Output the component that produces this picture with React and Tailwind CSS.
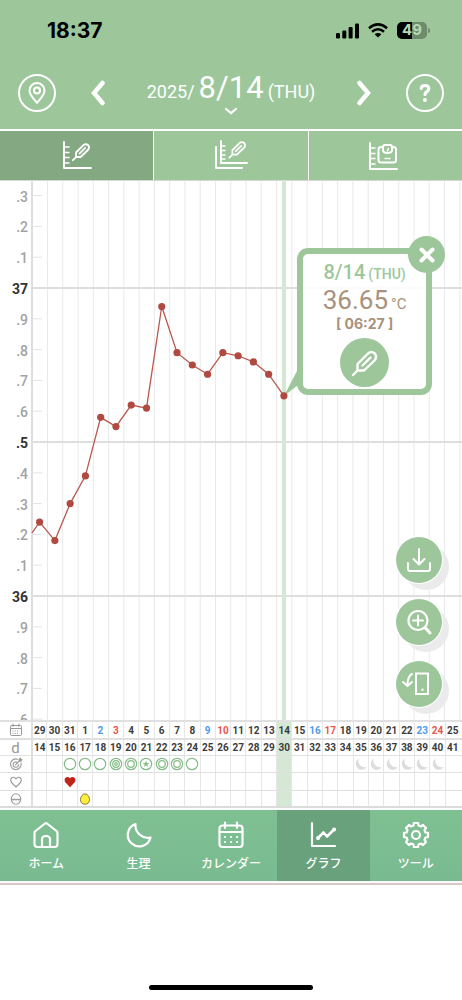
import { clsx } from "clsx";

const FIRST_X = 39.6;
const STEP = 15.27;

const READINGS = [
  36.24, 36.18, 36.3, 36.39, 36.58, 36.55, 36.62, 36.61, 36.94, 36.79, 36.75,
  36.72, 36.79, 36.78, 36.76, 36.72, 36.65,
];

const DAYS = [
  29, 30, 31, 1, 2, 3, 4, 5, 6, 7, 8, 9, 10, 11, 12, 13, 14, 15, 16, 17, 18, 19,
  20, 21, 22, 23, 24, 25,
];
const SATURDAYS = [4, 11, 18, 25];
const SUNDAYS = [5, 12, 19, 26];
const TODAY = 16;

const FERTILITY = {
  2: "open",
  3: "open",
  4: "open",
  5: "target",
  6: "double",
  7: "star",
  8: "double",
  9: "double",
  10: "open",
};

const TICKS = Array.from({ length: 18 }, (_, i) => 373 - i);

const tempToY = (temp) => 108 + (37 - temp) * 308;
const indexToX = (i) => FIRST_X + i * STEP;

function Icon({ size = 24, width = 2, className, children }) {
  return (
    <svg
      viewBox={`0 0 ${size} ${size}`}
      width={size}
      height={size}
      fill="none"
      stroke="currentColor"
      strokeWidth={width}
      strokeLinecap="round"
      strokeLinejoin="round"
      className={className}
      aria-hidden="true"
    >
      {children}
    </svg>
  );
}

function Thermometer() {
  return (
    <>
      <path d="M2 26 L6.500 21.500 V15 L17 4.500 Q20.500 1.700 23.800 4.500 Q26.500 8 23.500 11.500 L13 21.500 H6.500" />
      <path d="M11.500 16.500 L19.500 8.500" />
    </>
  );
}

function StatusBar() {
  return (
    <div className="flex h-[60px] items-center justify-between pt-px pr-[32px] pl-[47px]">
      <span className="font-['Inter',sans-serif] text-[21px] font-bold text-black">
        18:37
      </span>
      <div className="flex items-center gap-[9px] text-black">
        <svg width="23" height="16" viewBox="0 0 23 16" fill="currentColor">
          <rect x="0" y="10" width="4" height="5.500" rx="1.200" />
          <rect x="6.300" y="7.500" width="4" height="8" rx="1.200" />
          <rect x="12.600" y="4" width="4" height="11.500" rx="1.200" />
          <rect x="19" y="0.500" width="4" height="15" rx="1.200" />
        </svg>
        <svg width="20" height="15" viewBox="0 0 20 15" fill="none" stroke="currentColor" strokeWidth="2.500">
          <path d="M1 5.200 Q10 -2.400 19 5.200" />
          <path d="M4 8.800 Q10 3.600 16 8.800" />
          <path d="M10 14.500 L6.600 11.300 Q10 8.600 13.400 11.300 Z" fill="currentColor" stroke="none" />
        </svg>
        <div className="flex items-center gap-px">
          <span className="flex h-[17px] w-[30px] items-center justify-center rounded-[5px] bg-linear-to-r from-black from-50% to-[#6d8c6c] to-50% font-['Inter',sans-serif] text-[15px] font-bold text-[#b4d8b2]">
            49
          </span>
          <span className="h-[5px] w-[2px] rounded-r-full bg-[#6d8c6c]" />
        </div>
      </div>
    </div>
  );
}

function DateHeader() {
  return (
    <div className="flex h-[69px] items-start justify-between px-[18px] pt-[14px] text-white">
      <button type="button" aria-label="Location" className="flex size-[38px] items-center justify-center rounded-full border-2 border-white">
        <Icon size={24}>
          <path d="M12 22 C9 18 4.500 14 4.500 9.500 A7.500 7.500 0 0 1 19.500 9.500 C19.500 14 15 18 12 22 Z" />
          <circle cx="12" cy="9.500" r="3" />
        </Icon>
      </button>
      <button type="button" aria-label="Previous day" className="flex h-[38px] w-5 items-center justify-center">
        <svg width="16" height="26" viewBox="0 0 16 26" fill="none" stroke="currentColor" strokeWidth="4.500" strokeLinecap="round">
          <path d="M12.500 3 L4 13 L12.500 23" />
        </svg>
      </button>
      <button type="button" className="flex w-[182px] flex-col items-center">
        <span className="flex h-[33px] items-baseline gap-[4px] text-[18px] leading-[28px]">
          <span>2025/</span>
          <span className="text-[31px]">8/14</span>
          <span>(THU)</span>
        </span>
        <svg width="14" height="8" viewBox="0 0 14 8" fill="none" stroke="currentColor" strokeWidth="2.200" strokeLinecap="round">
          <path d="M2 2 L7 6 L12 2" />
        </svg>
      </button>
      <button type="button" aria-label="Next day" className="flex h-[38px] w-5 items-center justify-center">
        <svg width="16" height="26" viewBox="0 0 16 26" fill="none" stroke="currentColor" strokeWidth="4.500" strokeLinecap="round">
          <path d="M3.500 3 L12 13 L3.500 23" />
        </svg>
      </button>
      <button type="button" aria-label="Help" className="flex size-[38px] items-center justify-center rounded-full border-2 border-white">
        <svg width="14" height="20" viewBox="0 0 14 20" fill="none" stroke="currentColor" strokeWidth="3.200" strokeLinecap="round" strokeLinejoin="round">
          <path d="M3.200 5.500 Q3.500 2.500 7 2.500 Q10.800 2.500 10.800 5.800 Q10.800 7.800 8.800 8.800 Q7 9.700 7 11.500" />
          <circle cx="7" cy="17" r="2" fill="currentColor" stroke="none" />
        </svg>
      </button>
    </div>
  );
}

function Ruler() {
  return (
    <>
      <path d="M2 1 V27 H29" />
      <path d="M2 6 H7 M2 11.500 H7 M2 16.500 H7 M2 22 H7" strokeWidth="1.500" />
    </>
  );
}

function GraphTabs() {
  const tab =
    "flex h-[49px] flex-1 items-center justify-center border-white text-white";
  return (
    <div role="tablist" className="flex border-t-2 border-white bg-[#9dc79b]">
      <button type="button" role="tab" aria-selected="true" aria-label="体温" className={clsx(tab, "bg-[#83a882]")}>
        <Icon size={30}>
          <Ruler />
          <g transform="translate(9.500 1) scale(0.700)" strokeWidth="2.700">
            <Thermometer />
          </g>
        </Icon>
      </button>
      <button type="button" role="tab" aria-selected="false" aria-label="体温の比較" className={clsx(tab, "border-l")}>
        <Icon size={34}>
          <path d="M2 8 V29 H28" />
          <path d="M7 2 V24 H33" />
          <path d="M7 7 H11 M7 11.500 H11 M7 16 H11 M7 20 H11" strokeWidth="1.400" />
          <g transform="translate(14 1) scale(0.680)" strokeWidth="2.700">
            <Thermometer />
          </g>
        </Icon>
      </button>
      <button type="button" role="tab" aria-selected="false" aria-label="体重" className={clsx(tab, "border-l")}>
        <Icon size={34}>
          <g transform="translate(0 3)">
            <Ruler />
            <path d="M14 5 H13 Q10.500 5 10.500 7.500 V18 Q10.500 20.500 13 20.500 H25.500 Q28 20.500 28 18 V7.500 Q28 5 25.500 5 H24.500" />
            <path d="M15 5 Q15 3 17 3 H22 Q24 3 24 5 V8 Q24 11 19.500 11 Q15 11 15 8 Z" />
            <path d="M19.500 9 L20.500 6.500 M17 16.500 H22" strokeWidth="1.500" />
          </g>
        </Icon>
      </button>
    </div>
  );
}

function TemperatureChart() {
  const points = READINGS.map((t, i) => [indexToX(i), tempToY(t)]);
  const line = [[32, 353], ...points].map((p) => p.join(",")).join(" ");

  return (
    <svg
      viewBox="0 0 462 540"
      className="block w-full font-['Roboto',sans-serif]"
      role="img"
      aria-label="基礎体温グラフ"
    >
      {Array.from({ length: 28 }, (_, i) => (
        <line key={i} x1={47.5 + i * STEP} x2={47.5 + i * STEP} y1="0" y2="540" stroke="#e9e9e9" />
      ))}
      <line x1="0" x2="462" y1="0.500" y2="0.500" stroke="#d6d6d6" />
      <line x1="32" x2="32" y1="0" y2="540" stroke="#dedede" strokeWidth="2" />
      {TICKS.map((tick) => {
        const y = tempToY(tick / 10);
        const major = tick % 5 === 0;
        const label = tick % 10 === 0 ? tick / 10 : `.${tick % 10}`;
        return (
          <g key={tick}>
            <line
              x1="32"
              x2={major ? 462 : 42}
              y1={y}
              y2={y}
              stroke={major ? "#dedede" : "#e4e4e4"}
              strokeWidth={major ? 2 : 1}
            />
            <text
              x="28"
              y={y + 6}
              textAnchor="end"
              fontSize="14"
              fontWeight={major ? 700 : 500}
              fill={major ? "#333" : "#a3a3a3"}
            >
              {label}
            </text>
          </g>
        );
      })}
      <rect x="282" y="0" width="4" height="540" fill="#d5e8d5" />
      <path d="M284 216 L298 189 V205 Z" fill="#9dc79b" />
      <polyline points={line} fill="none" stroke="#b9584e" strokeWidth="1.300" />
      {points.map(([x, y]) => (
        <circle key={x} cx={x} cy={y} r="3.600" fill="#b04a40" />
      ))}
    </svg>
  );
}

function ReadingPopup() {
  return (
    <div className="absolute top-[68px] left-[64.300%] flex h-[147px] w-[135px] flex-col items-center rounded-[11px] border-6 border-[#9dc79b] bg-white/90 pt-[5px]">
      <p className="flex items-baseline gap-[3px] text-[20px] leading-[26px] font-medium text-[#9dc79b]">
        8/14 <span className="text-[14px] leading-none">(THU)</span>
      </p>
      <p className="flex items-baseline gap-[3px] text-[26px] leading-[31px] text-[#a8927c]">
        36.65 <span className="text-[15px] leading-none">°C</span>
      </p>
      <p className="font-['Inter',sans-serif] text-[14px] leading-4 font-bold text-[#a8927c]">
        [ 06:27 ]
      </p>
      <button type="button" aria-label="体温を編集" className="mt-[6px] flex size-[49px] shrink-0 items-center justify-center rounded-full bg-[#9dc79b] text-white">
        <Icon size={28} width={2.4}>
          <Thermometer />
        </Icon>
      </button>
      <button type="button" aria-label="閉じる" className="absolute -top-[18px] -right-[19px] flex size-[37px] items-center justify-center rounded-full bg-[#9dc79b] text-white">
        <Icon size={16} width={4}>
          <path d="M2.500 2.500 L13.500 13.500 M13.500 2.500 L2.500 13.500" />
        </Icon>
      </button>
    </div>
  );
}

function FloatingActions() {
  const fab =
    "flex size-[46px] items-center justify-center rounded-full bg-[#9dc79b] text-white shadow-[0_0_0_1px_#fff,7px_7px_0_0_#ebebeb]";
  return (
    <div className="absolute right-[20px] bottom-[13px] flex flex-col gap-4">
      <button type="button" aria-label="保存" className={fab}>
        <Icon size={28}>
          <path d="M14 3 V18 M8.500 13 L14 18.500 L19.500 13" />
          <path d="M3 17 V23 Q3 25 5 25 H23 Q25 25 25 23 V17" />
        </Icon>
      </button>
      <button type="button" aria-label="拡大" className={fab}>
        <Icon size={28}>
          <circle cx="13" cy="12.500" r="9.500" strokeWidth="2.200" />
          <path d="M8 12.500 H18 M13 7.500 V17.500" />
          <path d="M20 19.500 L25 25" strokeWidth="3" />
        </Icon>
      </button>
      <button type="button" aria-label="回転" className={fab}>
        <Icon size={28} className="overflow-visible">
          <path d="M11 3.500 H23 V24 H11 Z" strokeLinejoin="miter" />
          <circle cx="17.500" cy="19.800" r="0.400" strokeWidth="1.600" />
          <path d="M7 4 Q3 6 2.500 14 M-2 12 L2.500 16 L7 12" />
        </Icon>
      </button>
    </div>
  );
}

function FertilityMark({ type }) {
  if (!type) return null;
  return (
    <svg width="14" height="14" viewBox="0 0 14 14" fill="none" stroke="#86bd88" strokeWidth="1.200">
      <circle cx="7" cy="7" r="5.700" />
      {(type === "double" || type === "target") && <circle cx="7" cy="7" r="3.300" />}
      {type === "target" && <circle cx="7" cy="7" r="1.300" />}
      {type === "star" && (
        <path d="M7 3.500 L7.900 5.900 L10.400 6 L8.400 7.500 L9.100 10 L7 8.600 L4.900 10 L5.600 7.500 L3.600 6 L6.100 5.900 Z" fill="#86bd88" stroke="none" />
      )}
    </svg>
  );
}

function Moon() {
  return (
    <svg width="14" height="14" viewBox="0 0 14 14" fill="#dcdcdc">
      <path d="M5 1.500 A6 6 0 1 0 13 9.800 A6.200 6.200 0 0 1 5 1.500 Z" />
    </svg>
  );
}

function Row({ label, icon, className, children }) {
  return (
    <tr
      className={clsx(
        "grid grid-cols-[31px_repeat(28,minmax(0,1fr))] border-t border-[#e0e0e0] pr-[2px]",
        className,
      )}
    >
      <th scope="row" aria-label={label} className="flex items-center justify-center text-[#999]">
        {icon}
      </th>
      {DAYS.map((day, i) => (
        <td
          key={i}
          className={clsx(
            "flex items-center justify-center",
            i === 0 ? "border-l-2 border-[#dedede]" : "border-l border-[#e6e6e6]",
            i === TODAY && "bg-[#d5e8d5]",
          )}
        >
          {children(i, day)}
        </td>
      ))}
    </tr>
  );
}

function DayTable() {
  return (
    <table className="block text-[10px] font-bold text-[#3c3c3c]">
      <tbody className="block border-b-2 border-[#dcdcdc]">
        <Row
          label="日付"
          className="h-[18px] border-t-2"
          icon={
            <Icon size={14} width={1}>
              <rect x="1.500" y="2.500" width="11" height="10" rx="1" />
              <path d="M1.500 5.500 H12.500 M4 1 V3.500 M10 1 V3.500" />
              <path d="M3.500 8 H10.500 M3.500 10.500 H10.500" strokeDasharray="1 1.300" strokeLinecap="butt" />
            </Icon>
          }
        >
          {(i, day) => (
            <span
              className={clsx(
                SATURDAYS.includes(i) && "text-[#4f9bec]",
                SUNDAYS.includes(i) && "text-[#e8564c]",
              )}
            >
              {day}
            </span>
          )}
        </Row>
        <Row
          label="周期日数"
          className="h-[17px] border-t-2"
          icon={<span className="text-[15px] leading-[14px] font-normal">d</span>}
        >
          {(i) => i + 14}
        </Row>
        <Row
          label="妊娠しやすさ"
          className="h-[17px]"
          icon={
            <Icon size={14} width={1.1}>
              <path d="M8.500 2.200 A5.300 5.300 0 1 0 12 6" />
              <path d="M8 5.200 A2.700 2.700 0 1 0 9.500 7.500 M6.500 7.800 L12 2.300 M10 4.300 V2.500 L11.500 1 V2.500 H13 L11.800 4.300 Z" />
            </Icon>
          }
        >
          {(i) =>
            i >= 21 && i <= 26 ? <Moon /> : <FertilityMark type={FERTILITY[i]} />
          }
        </Row>
        <Row
          label="仲良し"
          className="h-[18px]"
          icon={
            <Icon size={14} width={1.1}>
              <path d="M7 12 L2.500 7.500 Q0.800 5 2.500 3 Q5 1.200 7 3.800 Q9 1.200 11.500 3 Q13.200 5 11.500 7.500 Z" />
            </Icon>
          }
        >
          {(i) =>
            i === 2 && (
              <svg width="12" height="12" viewBox="0 0 12 12" fill="#bf2418">
                <path d="M6 11.200 L1.500 6.500 Q-0.300 4 1.500 1.800 Q4 0 6 2.300 Q8 0 10.500 1.800 Q12.300 4 10.500 6.500 Z" />
              </svg>
            )
          }
        </Row>
        <Row
          label="排卵"
          className="h-[16px]"
          icon={
            <Icon size={14} width={1.1}>
              <ellipse cx="7" cy="7" rx="4.700" ry="5.300" />
              <path d="M2.500 7 L4 8 L5.500 7 L7 8 L8.500 7 L10 8 L11.500 7" />
            </Icon>
          }
        >
          {(i) =>
            i === 3 && (
              <svg width="12" height="12" viewBox="0 0 12 12">
                <path d="M6 0.800 C8.500 0.800 10.600 4 10.600 6.700 C10.600 9.500 8.500 11.200 6 11.200 C3.500 11.200 1.400 9.500 1.400 6.700 C1.400 4 3.500 0.800 6 0.800 Z" fill="#fdf03c" stroke="#94773f" />
              </svg>
            )
          }
        </Row>
      </tbody>
    </table>
  );
}

// eight teeth, each one up, across and back down to the root circle
const GEAR_POINTS = Array.from({ length: 8 }, (_, k) =>
  [
    [-15, 9.8],
    [-10, 12.2],
    [10, 12.2],
    [15, 9.8],
  ].map(([offset, r]) => {
    const a = ((k * 45 + offset) * Math.PI) / 180;
    return `${14 + r * Math.sin(a)},${14 - r * Math.cos(a)}`;
  }),
)
  .flat()
  .join(" ");

const NAV_ITEMS = [
  {
    label: "ホーム",
    icon: <path d="M2.500 12 Q2.500 11 3.500 10 L13 2.500 Q14 1.800 15 2.500 L24.500 10 Q25.500 11 25.500 12 V23 Q25.500 26 22.500 26 H5.500 Q2.500 26 2.500 23 Z M10 26 V18.500 Q10 15 14 15 Q18 15 18 18.500 V26" />,
  },
  {
    label: "生理",
    icon: <path d="M10.500 3 A11.500 11.500 0 1 0 25.500 16.500 A12.500 12.500 0 0 1 10.500 3 Z" />,
  },
  {
    label: "カレンダー",
    icon: (
      <>
        <rect x="2.500" y="4.500" width="23" height="21.500" rx="3" />
        <path d="M2.500 11 H25.500 M8 1.500 V7 M20 1.500 V7" />
        <path d="M8 16 H8.100 M14 16 H14.100 M20 16 H20.100 M8 21 H8.100 M14 21 H14.100 M20 21 H20.100" />
      </>
    ),
  },
  {
    label: "グラフ",
    active: true,
    icon: (
      <>
        <path d="M3 2 V25 H26" />
        <path d="M9 17 L14.500 11.500 L18 15.500 L25 8.500" strokeWidth="2.600" />
        <path d="M9 17 H9.100 M25 8.500 H25.100" strokeWidth="4" />
      </>
    ),
  },
  {
    label: "ツール",
    icon: (
      <>
        <circle cx="14" cy="14" r="4" />
        <polygon points={GEAR_POINTS} />
      </>
    ),
  },
];

function BottomNav() {
  return (
    <nav className="mt-[2px] border-b-2 border-[#d3cac6] pb-[2px]">
      <div className="flex bg-linear-to-b from-[#7fc092] to-[#7aba91]">
        {NAV_ITEMS.map((item) => (
          <a
            key={item.label}
            href="#"
            aria-current={item.active ? "page" : undefined}
            className={clsx(
              "flex h-[71px] flex-1 flex-col items-center gap-[6px] pt-[11px] text-[12px] leading-[18px] font-medium text-white",
              item.active && "bg-[#68a17b]",
            )}
          >
            <Icon size={28} width={2.2}>
              {item.icon}
            </Icon>
            {item.label}
          </a>
        ))}
      </div>
    </nav>
  );
}

export default function App() {
  return (
    <div className="flex min-h-screen flex-col bg-white font-['Roboto','Noto_Sans_CJK_JP',sans-serif]">
      <header className="bg-[#9dc79b]">
        <StatusBar />
        <DateHeader />
        <GraphTabs />
      </header>
      <main>
        <div className="relative">
          <TemperatureChart />
          <ReadingPopup />
          <FloatingActions />
        </div>
        <DayTable />
      </main>
      <BottomNav />
      <div className="mx-auto mt-auto mb-[10px] h-[5px] w-[164px] rounded-full bg-black" />
    </div>
  );
}
